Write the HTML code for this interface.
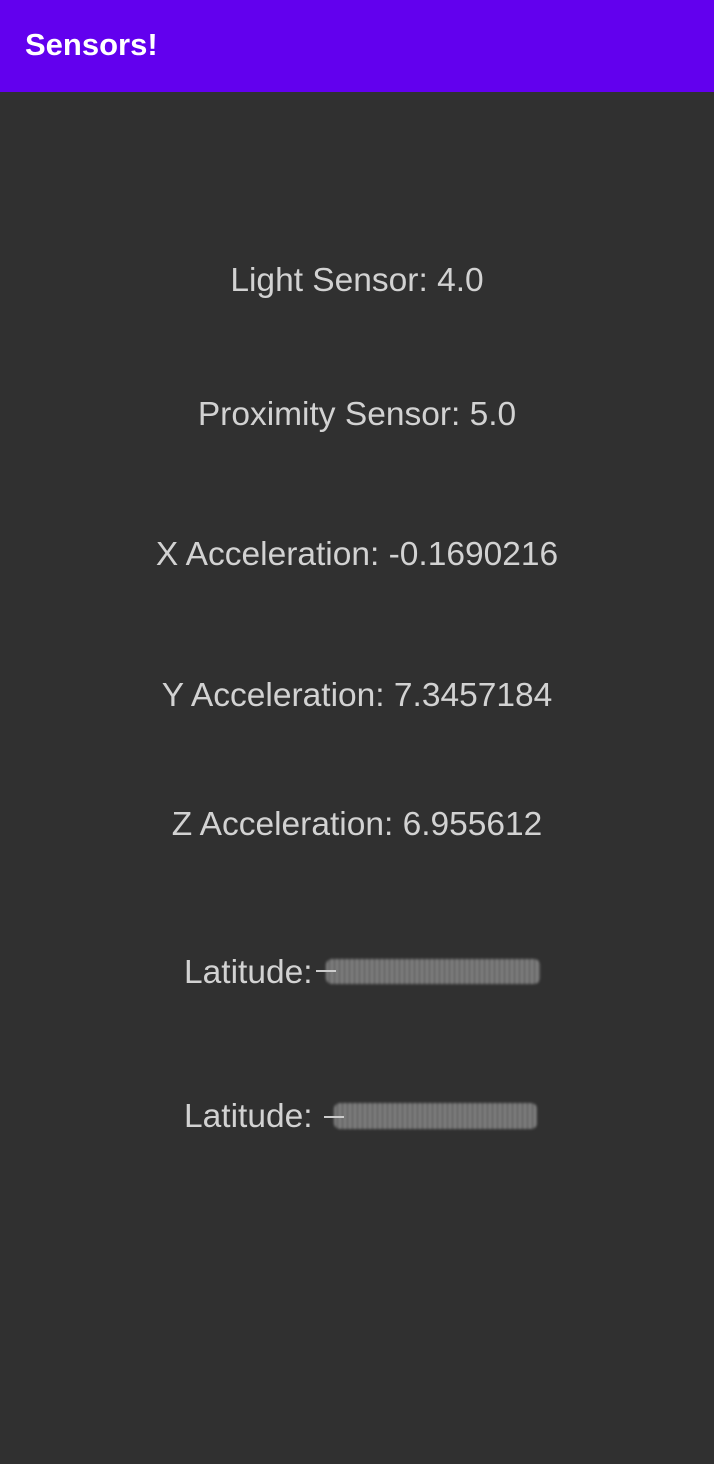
<!DOCTYPE html>
<html><head><style>
body{margin:0;width:714px;height:1464px;background:#303030;font-family:"Liberation Sans",sans-serif;overflow:hidden;position:relative}
.bar{position:absolute;left:0;top:0;width:714px;height:92px;background:#6200ee}
.title{position:absolute;left:25px;top:26px;font-size:31px;font-weight:bold;color:#fff;line-height:38px}
.t{position:absolute;left:0;width:714px;text-align:center;color:#d2d2d2;font-size:33.5px;line-height:40px}
.s{position:absolute;background:repeating-linear-gradient(90deg,#9a9a9a 0 2px,#6e6e6e 2px 5px);filter:blur(1.2px);border-radius:6px;opacity:.85}
</style></head><body>
<div class="bar"></div><div class="title">Sensors!</div>
<div class="t" style="top:261px">Light Sensor: 4.0</div>
<div class="t" style="top:395px">Proximity Sensor: 5.0</div>
<div class="t" style="top:535px">X Acceleration: -0.1690216</div>
<div class="t" style="top:676px">Y Acceleration: 7.3457184</div>
<div class="t" style="top:805px">Z Acceleration: 6.955612</div>
<div class="t" style="top:953px;text-align:left;left:184px">Latitude:</div>
<div class="s" style="left:326px;top:959px;width:214px;height:25px"></div>
<div style="position:absolute;left:316px;top:970px;width:20px;height:2px;background:#ccc"></div>
<div class="t" style="top:1097px;text-align:left;left:184px">Latitude:</div>
<div class="s" style="left:334px;top:1103px;width:203px;height:26px"></div>
<div style="position:absolute;left:324px;top:1116px;width:20px;height:2px;background:#ccc"></div>
</body></html>
